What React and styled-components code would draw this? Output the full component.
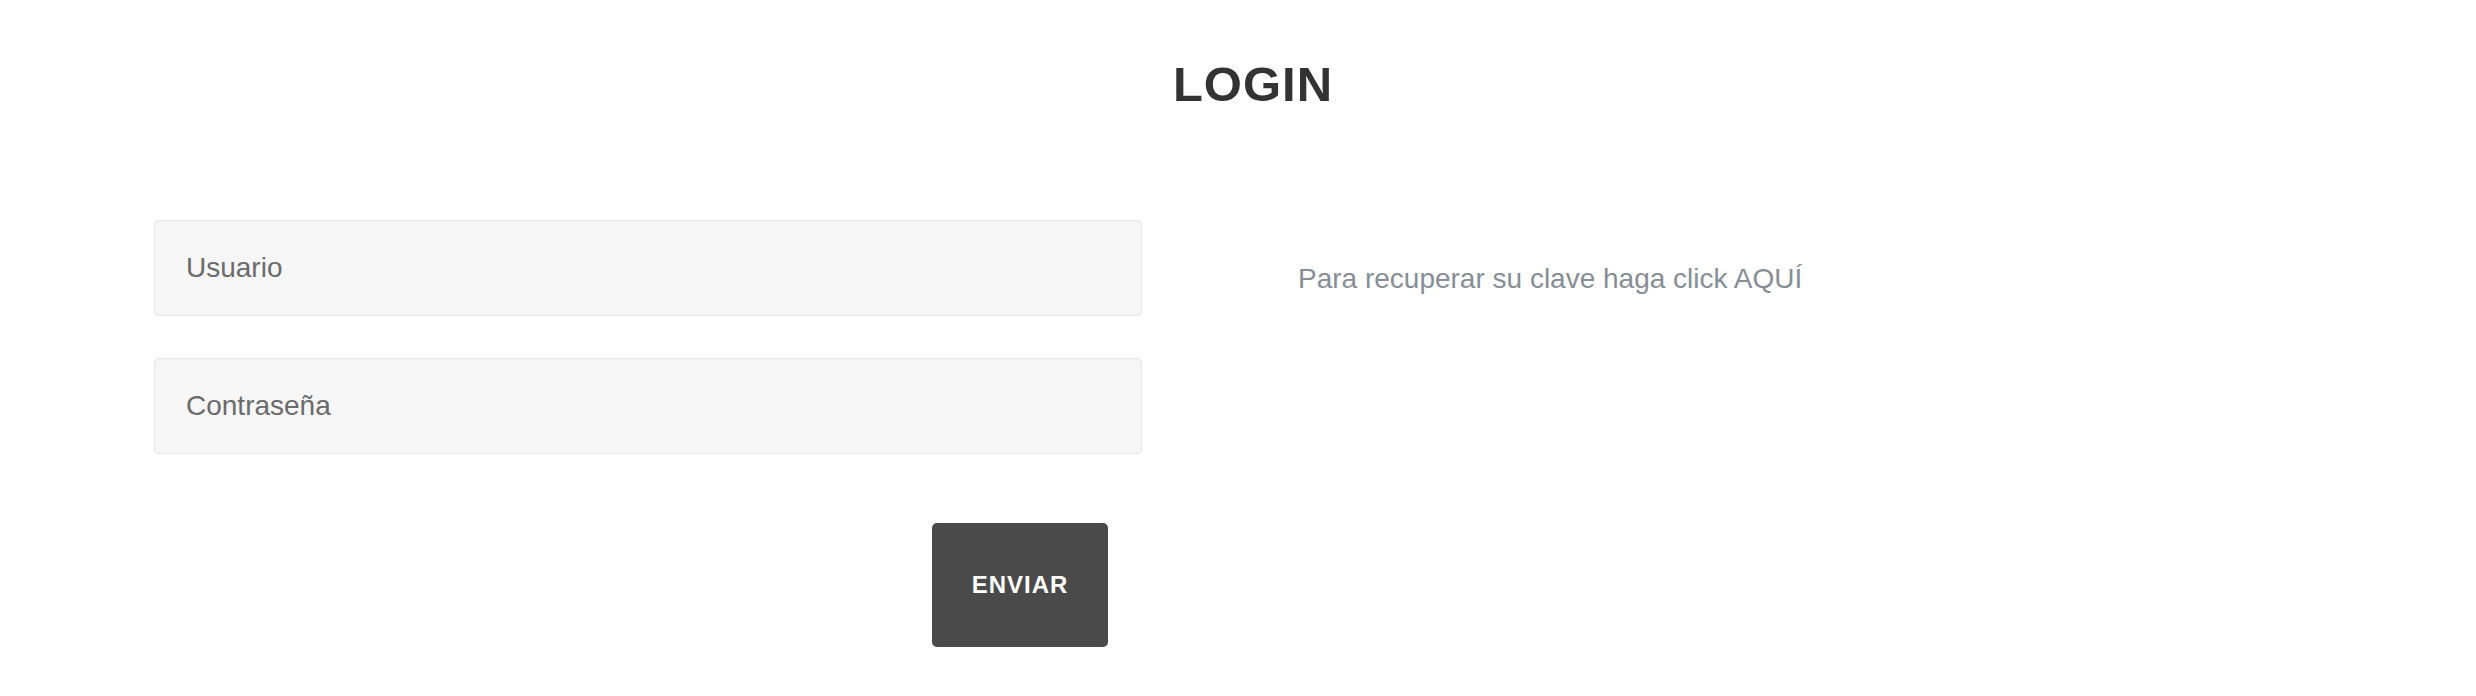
import styled, { createGlobalStyle } from "styled-components";

const GlobalStyle = createGlobalStyle`
  body {
    margin: 0;
    background: #ffffff;
    font-family: "Liberation Sans", Arial, sans-serif;
  }
`;

const Page = styled.div`
  padding-top: 60px;
`;

const Title = styled.h1`
  margin: 0;
  padding-left: 30px;
  font-size: 49px;
  line-height: 49px;
  font-weight: bold;
  letter-spacing: 1px;
  color: #333333;
  text-align: center;
`;

const Row = styled.div`
  display: grid;
  grid-template-columns: 988px 1fr;
  column-gap: 156px;
  padding-left: 154px;
  margin-top: 111px;
`;

const Form = styled.form`
  display: flex;
  flex-direction: column;
  gap: 42px;
`;

const Input = styled.input`
  box-sizing: border-box;
  height: 96px;
  width: 100%;
  padding: 0 31px;
  border: 1px solid #e6e6e6;
  border-radius: 4px;
  background: #f6f6f6;
  font-family: "Liberation Sans", Arial, sans-serif;
  font-size: 28px;
  color: #555;
  outline: none;

  &::placeholder {
    color: #6b6b6b;
  }
`;

const SubmitButton = styled.button`
  align-self: flex-end;
  margin-top: 27px;
  margin-right: 34px;
  width: 176px;
  height: 124px;
  border: none;
  border-radius: 5px;
  background: #4a4a4a;
  color: #ffffff;
  font-family: "Liberation Sans", Arial, sans-serif;
  font-size: 24px;
  font-weight: bold;
  letter-spacing: 1px;
  cursor: pointer;
`;

const Recover = styled.p`
  margin: 43px 0 0;
  font-size: 28px;
  color: #868e96;
`;

const App = () => {
  return (
    <Page>
      <GlobalStyle />
      <Title>LOGIN</Title>
      <Row>
        <Form onSubmit={(e) => e.preventDefault()}>
          <Input type="text" placeholder="Usuario" />
          <Input type="password" placeholder="Contraseña" />
          <SubmitButton type="submit">ENVIAR</SubmitButton>
        </Form>
        <Recover>Para recuperar su clave haga click AQUÍ</Recover>
      </Row>
    </Page>
  );
};

export default App;
